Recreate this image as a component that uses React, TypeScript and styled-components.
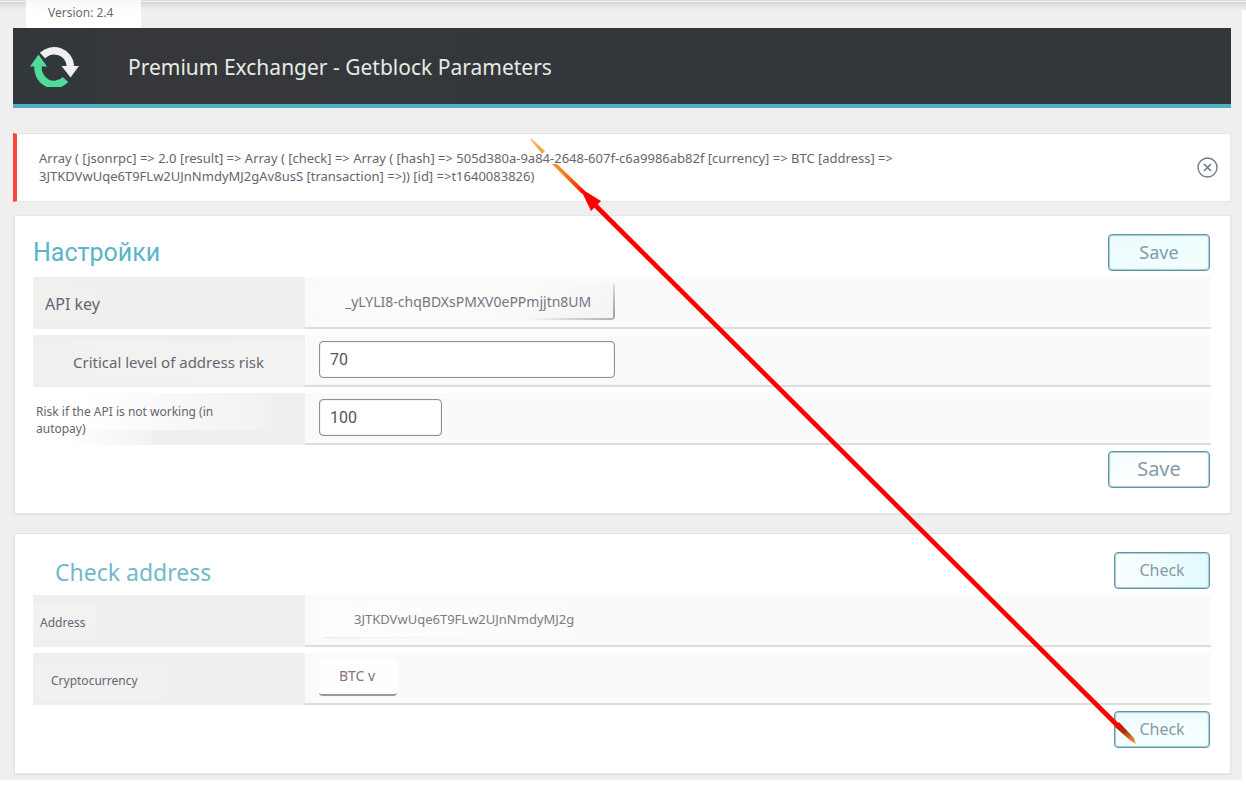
import React from "react";
import styled, { createGlobalStyle, css } from "styled-components";

const GlobalStyle = createGlobalStyle`
  *, *::before, *::after { box-sizing: border-box; }
  body {
    margin: 0;
    background: #fff;
    color: #666570;
    font-family: "Noto Sans", "Open Sans", sans-serif;
  }
`;

const Page = styled.div`
  position: relative;
  margin-right: 4px;
  padding: 0 11px 6px 13px;
  background: #efefef;
`;

const TopEdge = styled.div`
  height: 10px;
  margin: 0 -15px -10px -13px;
  background: linear-gradient(#dadae2 0 1px, #f4f4fa 1px 2px, #d8d8da 2px, #efefef);
`;

const Version = styled.div`
  position: relative;
  width: 115px;
  height: 28px;
  margin-left: 13px;
  padding: 4px 22px;
  background: linear-gradient(#f6f7f6, #fff 12px);
  color: #6f6772;
  font-size: 12px;
  line-height: 18px;
`;

const Header = styled.header`
  display: flex;
  align-items: center;
  height: 80px;
  padding: 0 17px;
  gap: 49px;
  background: linear-gradient(90deg, #32373c 60px, #36373a 110px, #32373c 600px);
  border-bottom: 4px solid #51b1c4;
`;

const Title = styled.h1`
  margin: 0;
  padding-top: 2px;
  color: #e6ebe4;
  font-size: 21px;
  font-weight: 400;
  line-height: 30px;
`;

const Notice = styled.section`
  display: flex;
  align-items: center;
  justify-content: space-between;
  margin-top: 25px;
  min-height: 69px;
  padding: 0 12px 0 22px;
  background: #fff;
  border: 1px solid #e5e5e5;
  border-left: 4px solid #fb4538;
`;

const NoticeText = styled.p`
  margin: 0;
  padding-bottom: 2px;
  max-width: 890px;
  font-size: 13px;
  line-height: 18px;
`;

const CloseButton = styled.button`
  display: flex;
  padding: 0;
  border: 0;
  background: none;
  color: #737c89;
`;

const Card = styled.form<{ $gap: number }>`
  margin: ${(p) => p.$gap}px 0 0 1px;
  padding: 18px 19px 25px 18px;
  background: #fff;
  border: 1px solid #e5e5e5;
  box-shadow: 0 1px 1px #e2e2e2;
`;

const CardHead = styled.div`
  display: flex;
  justify-content: space-between;
  height: 43px;
  padding-right: 1px;
`;

const CardFoot = styled.div`
  display: flex;
  justify-content: flex-end;
  padding: 6px 1px 0 0;
`;

const Heading = styled.h2<{ $latin?: boolean }>`
  margin: 0;
  color: #5ab5c8;
  font-family: Roboto, sans-serif;
  font-size: 25px;
  font-weight: 400;
  line-height: 38px;
  ${(p) =>
    p.$latin &&
    css`
      padding-left: 22px;
      color: #72b9c9;
      font-family: "Noto Sans", sans-serif;
      font-size: 23px;
      line-height: 40px;
    `}
`;

const Button = styled.button<{ $width: number; $size: number; $tint: string }>`
  width: ${(p) => p.$width}px;
  height: 37px;
  padding: 0 0 1px;
  border: 1px solid #5d95a1;
  border-radius: 4px;
  box-shadow: inset 0 0 1px 1px #a9cbd2;
  background: ${(p) => p.$tint};
  color: #849ba8;
  font-family: inherit;
  font-size: ${(p) => p.$size}px;
  line-height: 24px;
`;

const Rows = styled.div`
  display: flex;
  flex-direction: column;
  gap: 6px;
`;

const Row = styled.div`
  display: grid;
  grid-template-columns: 272px 1fr;
  height: 52px;
`;

const Label = styled.label<{ $size: number; $inset: number; $fade?: string }>`
  display: flex;
  align-items: center;
  padding: 2px 50px 0 ${(p) => p.$inset}px;
  background: ${(p) => (p.$fade ? `${p.$fade}, ` : "")}#efefef;
  font-size: ${(p) => p.$size}px;
  line-height: 17px;
  white-space: ${(p) => (p.$inset > 3 ? "nowrap" : "normal")};
`;

const Cell = styled.div`
  padding: 6px 14px 0;
  background: #fafafa;
  border-bottom: 2px solid #dcdcdc;
`;

const field = css`
  display: block;
  height: 37px;
  border-radius: 4px;
  font-family: inherit;
  font-size: 14px;
  outline: none;
`;

const NumberField = styled.input<{ $width: number }>`
  ${field}
  width: ${(p) => p.$width}px;
  padding: 0 10px 1px;
  border: 1px solid #8c8f94;
  box-shadow: inset 0 0 1px #8c8f94;
  background: #fff;
  color: #555;
  font-family: Roboto, sans-serif;
  font-size: 16px;
`;

const KeyField = styled.input`
  ${field}
  width: 296px;
  padding: 0 23px 1px 26px;
  border: 0;
  background:
    linear-gradient(90deg, transparent, #b0b0b0) right bottom / 86px 2px no-repeat,
    linear-gradient(#ddd, #999) right top / 2px 100% no-repeat,
    linear-gradient(150deg, #fbfbfb 60%, #f4f3f2);
  color: #777482;
`;

const AddressField = styled.input`
  ${field}
  width: 296px;
  padding: 0 10px 1px 35px;
  border: 0;
  background:
    linear-gradient(90deg, #e9e9e9, #fafafa) 4px bottom / 144px 1px no-repeat,
    linear-gradient(90deg, #fdfdfd, #fafafa);
  color: #7f7984;
  font-size: 13px;
`;

const CurrencySelect = styled.select`
  ${field}
  appearance: none;
  width: 78px;
  padding: 0 0 2px 20px;
  border: 0;
  border-bottom: 2px solid #999;
  background: #fefefe;
  color: #7c747e;
`;

const Arrow = styled.svg`
  position: absolute;
  top: 0;
  left: 0;
  pointer-events: none;
`;

const fades = {
  api: "linear-gradient(90deg, #f1f1f0, #efefef) 0 7px / 84px 38px no-repeat",
  level: "linear-gradient(90deg, #f1f1ef, #f3f3f1) 0 7px / 272px 41px no-repeat",
  risk:
    "linear-gradient(90deg, #fff 50px, #f1f1f1) 0 0 / 240px 37px no-repeat, linear-gradient(90deg, #fff 30px, #f3f3f3) 0 0 / 119px 52px no-repeat",
  address: "linear-gradient(#f2f2f1, #f1f1f1) 0 10px / 64px 35px no-repeat",
  currency: "linear-gradient(#f1f1f1, #f1f1f1) 0 9px / 132px 37px no-repeat",
};

const tints = {
  aqua: "linear-gradient(160deg, #edfafd, #effeff 50%, #f5fdfd)",
  white: "linear-gradient(150deg, #f0fcfe, #fff 45%)",
  right: "linear-gradient(90deg, #fafefe, #e2faff)",
  pale: "linear-gradient(#ebfbfc, #f5feff 40%)",
};

function Logo() {
  return (
    <svg width="49" height="42" viewBox="0 0 49 42" aria-hidden="true">
      <path d="M12.500 10.500A16.500 16.500 0 0 1 40.500 21" fill="none" stroke="#f0f0f0" strokeWidth="7.500" />
      <path d="M31.500 21H49L40.500 32.500Z" fill="#f0f0f0" />
      <path d="M8.500 19A16 16.500 0 0 0 35.500 34.500" fill="none" stroke="#50dc98" strokeWidth="7.500" />
      <path d="M0 21.500L8.500 9.500L17 21.500Z" fill="#50dc98" />
    </svg>
  );
}

export default function App() {
  return (
    <Page>
      <GlobalStyle />
      <TopEdge />
      <Version>Version: 2.4</Version>
      <Header>
        <Logo />
        <Title>Premium Exchanger - Getblock Parameters</Title>
      </Header>

      <Notice>
        <NoticeText>
          Array ( [jsonrpc] =&gt; 2.0 [result] =&gt; Array ( [check] =&gt; Array ( [hash] =&gt;
          505d380a-9a84-2648-607f-c6a9986ab82f [currency] =&gt; BTC [address] =&gt;
          <br />
          3JTKDVwUqe6T9FLw2UJnNmdyMJ2gAv8usS [transaction] =&gt;)) [id] =&gt;t1640083826)
        </NoticeText>
        <CloseButton type="button" aria-label="Close">
          <svg width="21" height="21" viewBox="0 0 21 21" fill="none" stroke="currentColor">
            <circle cx="10.500" cy="10.500" r="9.500" strokeWidth="1.400" />
            <path d="M7 7L14 14M14 7L7 14" strokeWidth="1.700" />
          </svg>
        </CloseButton>
      </Notice>

      <Card $gap={13}>
        <CardHead>
          <Heading>Настройки</Heading>
          <Button type="button" $width={102} $size={18} $tint={tints.aqua}>Save</Button>
        </CardHead>
        <Rows>
          <Row>
            <Label htmlFor="api-key" $size={16} $inset={12} $fade={fades.api}>API key</Label>
            <Cell>
              <KeyField id="api-key" defaultValue="_yLYLI8-chqBDXsPMXV0ePPmjjtn8UM" />
            </Cell>
          </Row>
          <Row>
            <Label htmlFor="level" $size={15} $inset={40} $fade={fades.level}>Critical level of address risk</Label>
            <Cell>
              <NumberField id="level" $width={296} defaultValue="70" />
            </Cell>
          </Row>
          <Row>
            <Label htmlFor="risk" $size={12} $inset={3} $fade={fades.risk}>Risk if the API is not working (in autopay)</Label>
            <Cell>
              <NumberField id="risk" $width={123} defaultValue="100" />
            </Cell>
          </Row>
        </Rows>
        <CardFoot>
          <Button type="submit" $width={102} $size={20} $tint={tints.white}>Save</Button>
        </CardFoot>
      </Card>

      <Card $gap={19}>
        <CardHead>
          <Heading $latin>Check address</Heading>
          <Button type="button" $width={96} $size={16} $tint={tints.right}>Check</Button>
        </CardHead>
        <Rows>
          <Row>
            <Label htmlFor="address" $size={12} $inset={7} $fade={fades.address}>Address</Label>
            <Cell>
              <AddressField id="address" defaultValue="3JTKDVwUqe6T9FLw2UJnNmdyMJ2g" />
            </Cell>
          </Row>
          <Row>
            <Label htmlFor="currency" $size={12} $inset={18} $fade={fades.currency}>Cryptocurrency</Label>
            <Cell>
              <CurrencySelect id="currency">
                <option>BTC v</option>
              </CurrencySelect>
            </Cell>
          </Row>
        </Rows>
        <CardFoot>
          <Button type="submit" $width={96} $size={16} $tint={tints.pale}>Check</Button>
        </CardFoot>
      </Card>

      <Arrow width="1160" height="760" viewBox="0 0 1160 760" aria-hidden="true">
        <defs>
          <linearGradient id="tip" gradientUnits="userSpaceOnUse" x1="531" y1="139" x2="584" y2="192">
            <stop offset="0" stopColor="#f9b768" />
            <stop offset="0.6" stopColor="#f08a1c" />
            <stop offset="1" stopColor="#ff1a00" />
          </linearGradient>
          <linearGradient id="tail" gradientUnits="userSpaceOnUse" x1="1116" y1="724" x2="1136" y2="743">
            <stop offset="0" stopColor="#ff0000" />
            <stop offset="0.4" stopColor="#a83008" />
            <stop offset="1" stopColor="#f5a840" />
          </linearGradient>
        </defs>
        <path d="M530 139L532 139L545 151L542 154Z" fill="url(#tip)" />
        <path d="M552 164L557 164L585 191L582 194Z" fill="url(#tip)" />
        <path d="M580 188L601 201L591 211Z" fill="#ff0000" />
        <path d="M595 205L1119 727" stroke="#ff0000" strokeWidth="4.600" />
        <path d="M1115 727L1119 722L1134 738L1136 744L1131 741Z" fill="url(#tail)" />
      </Arrow>
    </Page>
  );
}
